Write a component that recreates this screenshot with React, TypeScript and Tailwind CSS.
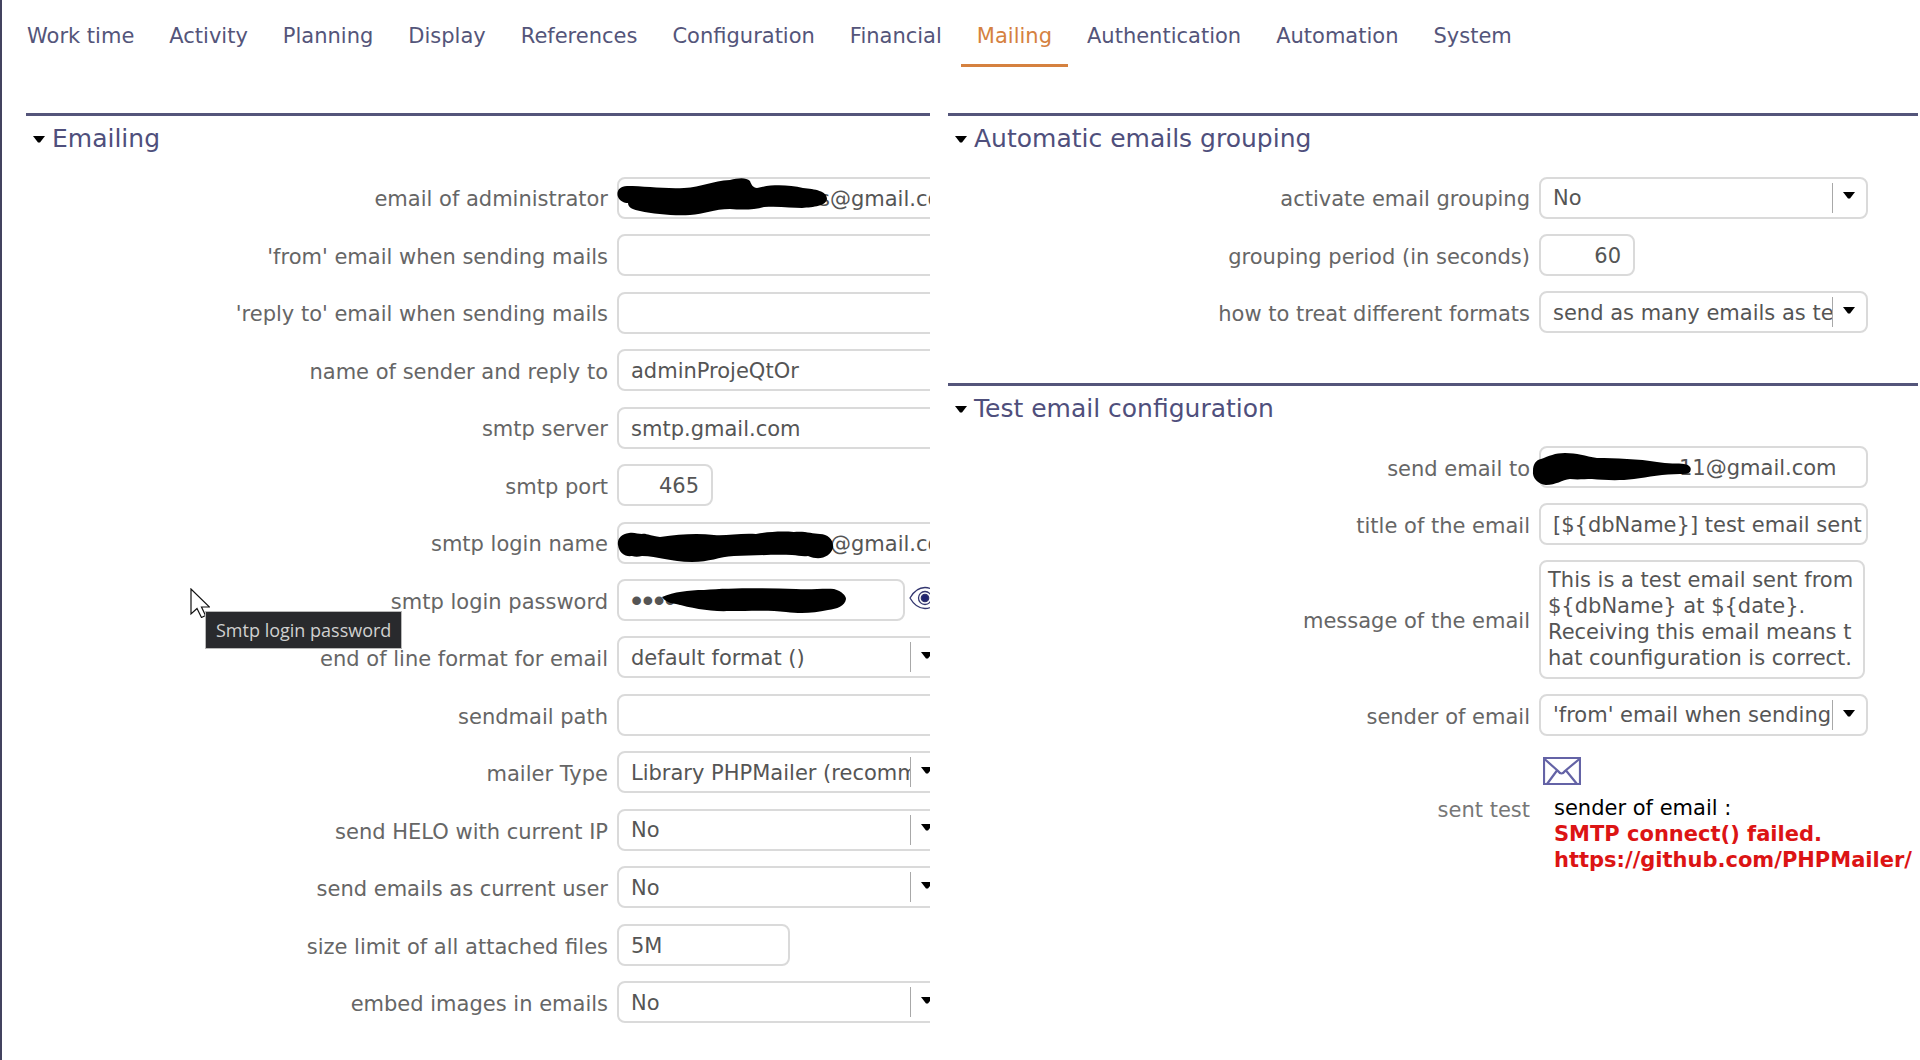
import { useState } from 'react';
import type { ReactNode } from 'react';

const tabs = [
  'Work time',
  'Activity',
  'Planning',
  'Display',
  'References',
  'Configuration',
  'Financial',
  'Mailing',
  'Authentication',
  'Automation',
  'System',
];

const testMessage = [
  'This is a test email sent from',
  '${dbName} at ${date}.',
  'Receiving this email means t',
  'hat counfiguration is correct.',
].join('\n');

const fieldBox = 'h-[42px] rounded-lg border-2 border-[#dadada] bg-white text-[#555555] outline-none';

function Caret() {
  return (
    <svg viewBox="0 0 12 7" className="h-[7px] w-3 shrink-0" aria-hidden="true">
      <path d="M0 0h12L7 6.500H5z" fill="#000" />
    </svg>
  );
}

function Section({ title, children }: { title: string; children: ReactNode }) {
  const [open, setOpen] = useState(true);
  return (
    <section className="overflow-hidden border-t-[3px] border-[#54557a]">
      <h2 className="text-[25px] leading-[30px] text-[#4f4f7c]">
        <button type="button" onClick={() => setOpen(!open)} className="flex items-center gap-[7px] px-[7px] py-2">
          <Caret />
          {title}
        </button>
      </h2>
      {open && children}
    </section>
  );
}

function Row({ label, id, children, extra }: { label: string; id: string; children: ReactNode; extra?: ReactNode }) {
  return (
    <div className="relative grid grid-cols-[582px_auto] items-center gap-[9px]">
      <label htmlFor={id} className="pt-[5px] text-right text-[#666666]">{label}</label>
      <div className="relative flex items-center gap-1">{children}</div>
      {extra}
    </div>
  );
}

function TextField({ id, value, className = 'w-[329px] px-3' }: { id: string; value: string; className?: string }) {
  return <input id={id} type="text" defaultValue={value} className={`${fieldBox} shrink-0 pt-[2px] ${className}`} />;
}

function SelectField({ id, value }: { id: string; value: string }) {
  return (
    <div className={`${fieldBox} flex w-[329px] shrink-0 items-center`}>
      <select id={id} defaultValue={value} className="h-full min-w-0 flex-1 appearance-none bg-transparent pt-[2px] pl-3 outline-none">
        <option>{value}</option>
      </select>
      <span className="h-[30px] w-px bg-[#a8a8a8]" />
      <span className="pointer-events-none mr-[11px] ml-[10px] pb-1">
        <Caret />
      </span>
    </div>
  );
}

function Scribble({ d }: { d: string }) {
  return (
    <svg className="pointer-events-none absolute top-0 left-0" viewBox="0 0 250 42" width="250" height="42" overflow="visible" aria-hidden="true">
      <path d={d} fill="#000" />
    </svg>
  );
}

function EyeIcon() {
  return (
    <svg viewBox="0 0 32 24" className="h-6 w-8" fill="none" stroke="#33366f" strokeWidth="1.3">
      <path d="M1 12C5 5 10 1.5 16 1.5S27 5 31 12C27 19 22 22.500 16 22.500S5 19 1 12z" />
      <circle cx="16" cy="12" r="6.500" />
      <circle cx="16" cy="12" r="3.700" fill="#1f2370" />
    </svg>
  );
}

function EnvelopeIcon() {
  return (
    <svg viewBox="0 0 38 28" className="h-7 w-[38px]" fill="none" stroke="#6463a6" strokeWidth="2.200">
      <path d="M1 1h36v26H1z" />
      <path d="M1 1.500l14 12.500q3.500 5 7 0L37 1.500M14 13.500L4 27M23 13.500L34 27" />
    </svg>
  );
}

function PointerTooltip() {
  return (
    <div className="pointer-events-none absolute top-[17px] left-[164px]">
      <svg viewBox="0 0 20 30" className="h-[30px] w-5" aria-hidden="true">
        <path d="M1 1v25l6-5.500 4.500 9 4-2-4-8.500h8z" fill="#fff" stroke="#111" strokeWidth="1.200" />
      </svg>
      <div
        role="tooltip"
        className="absolute top-[23px] left-[15px] h-[38px] border border-[#b8b8b8] bg-[#292a2d] px-[10px] font-['Open_Sans',sans-serif] text-lg leading-9 whitespace-nowrap text-[#d0d0d0]"
      >
        Smtp login password
      </div>
    </div>
  );
}

export default function App() {
  const [activeTab, setActiveTab] = useState('Mailing');

  return (
    <div className="min-h-screen overflow-hidden border-l-2 border-[#43435f] bg-white font-[Verdana,'DejaVu_Sans',sans-serif] text-[21px]">
      <nav className="flex gap-[3px] pt-[5px] pl-[9px]">
        {tabs.map((tab) => (
          <button
            key={tab}
            type="button"
            onClick={() => setActiveTab(tab)}
            className={`border-b-[3px] px-4 pt-[17px] pb-[14px] leading-7 whitespace-nowrap ${
              tab === activeTab ? 'border-[#d5813f] text-[#d5813f]' : 'border-transparent text-[#54557a]'
            }`}
          >
            {tab}
          </button>
        ))}
      </nav>

      <main className="grid grid-cols-[904fr_970fr] items-start gap-[18px] pt-[46px] pr-[2px] pl-6">
        <Section title="Emailing">
          <div className="mt-[7px] grid min-h-[862px] auto-rows-fr">
            <Row label="email of administrator" id="admin-email">
              <TextField id="admin-email" value="s@gmail.com" className="w-[329px] pl-[200px]" />
              <Scribble d="M10 9C2 9-1 15 1 20c2 4 6 6 10 6 0 5 6 7 12 8 14 3 34 5 50 4 14-1 24-6 40-6 12 1 24 1 34-2 16-1 28 1 38 1 12-1 24-2 25-9 0-8-12-10-24-11-14-3-30-4-46 0-4 0-6-4-7-7-4-4-12-3-20-1-18 1-28 7-46 8-20 1-40-2-57-2z" />
            </Row>
            <Row label="'from' email when sending mails" id="from-email">
              <TextField id="from-email" value="" />
            </Row>
            <Row label="'reply to' email when sending mails" id="reply-email">
              <TextField id="reply-email" value="" />
            </Row>
            <Row label="name of sender and reply to" id="sender-name">
              <TextField id="sender-name" value="adminProjeQtOr" />
            </Row>
            <Row label="smtp server" id="smtp-server">
              <TextField id="smtp-server" value="smtp.gmail.com" />
            </Row>
            <Row label="smtp port" id="smtp-port">
              <TextField id="smtp-port" value="465" className="w-24 px-3 text-right" />
            </Row>
            <Row label="smtp login name" id="smtp-login">
              <TextField id="smtp-login" value="@gmail.com" className="w-[329px] pl-[211px]" />
              <Scribble d="M12 11C4 12 0 17 1 23c1 8 7 12 14 11 3 1 6 1 10 0 16 0 28 6 50 6 18 0 26-5 42-6 18 0 38-2 58-1 6 0 10 2 16 1 12 5 22 1 25-8 1-8-5-14-13-14-8 0-14-3-26-2-14-1-26 0-38 2-16-1-30 2-42 1-16-2-34-1-54 2-10-1-14-4-18-3-4 0-8-2-13-1z" />
            </Row>
            <Row label="smtp login password" id="smtp-password" extra={<PointerTooltip />}>
              <input
                id="smtp-password"
                type="password"
                defaultValue="secret"
                className={`${fieldBox} w-72 shrink-0 px-3 font-['Liberation_Sans',sans-serif] text-[32px]`}
              />
              <Scribble d="M45 18c12-5 26-7 42-7 26-2 60-2 92-1 16 1 28-1 38 0 8 2 12 7 12 10-1 7-9 10-18 11-14 3-26 4-42 2-18-2-36-1-56-1-20 1-38-3-54-7-8-1-12-4-14-7z" />
              <button type="button" aria-label="Show password" className="shrink-0 pb-1">
                <EyeIcon />
              </button>
            </Row>
            <Row label="end of line format for email" id="eol-format">
              <SelectField id="eol-format" value="default format ()" />
            </Row>
            <Row label="sendmail path" id="sendmail-path">
              <TextField id="sendmail-path" value="" />
            </Row>
            <Row label="mailer Type" id="mailer-type">
              <SelectField id="mailer-type" value="Library PHPMailer (recommended)" />
            </Row>
            <Row label="send HELO with current IP" id="helo-ip">
              <SelectField id="helo-ip" value="No" />
            </Row>
            <Row label="send emails as current user" id="send-as-user">
              <SelectField id="send-as-user" value="No" />
            </Row>
            <Row label="size limit of all attached files" id="size-limit">
              <TextField id="size-limit" value="5M" className="w-[173px] px-3" />
            </Row>
            <Row label="embed images in emails" id="embed-images">
              <SelectField id="embed-images" value="No" />
            </Row>
          </div>
        </Section>

        <div className="flex min-w-0 flex-col gap-[42px]">
          <Section title="Automatic emails grouping">
            <div className="mt-[7px] grid min-h-[172px] auto-rows-fr">
              <Row label="activate email grouping" id="activate-grouping">
                <SelectField id="activate-grouping" value="No" />
              </Row>
              <Row label="grouping period (in seconds)" id="grouping-period">
                <TextField id="grouping-period" value="60" className="w-24 px-3 text-right" />
              </Row>
              <Row label="how to treat different formats" id="format-mode">
                <SelectField id="format-mode" value="send as many emails as templates" />
              </Row>
            </div>
          </Section>

          <Section title="Test email configuration">
            <div className="mt-[14px] flex flex-col gap-[15px]">
              <Row label="send email to" id="test-to">
                <TextField id="test-to" value="11@gmail.com" className="w-[329px] pl-[138px]" />
                <Scribble d="M2 13c8-3 14-6 24-6 12 0 20 3 32 5 18 0 42 1 60 4 10 2 22 1 27 2 6 1 8 4 6 8-2 2-6 2-10 2-16 0-32 3-46 5-16 2-30 1-42 0-8 0-14 1-22 0-8 1-14 6-24 6C-1 38-7 32-6 25c0-7 3-11 8-12z" />
              </Row>
              <Row label="title of the email" id="test-title">
                <TextField id="test-title" value="[${dbName}] test email sent" className="w-[329px] pl-3" />
              </Row>
              <Row label="message of the email" id="test-message">
                <textarea
                  id="test-message"
                  defaultValue={testMessage}
                  className="h-[119px] w-[326px] shrink-0 resize-none overflow-hidden rounded-lg border-2 border-[#dadada] pt-[5px] pl-[7px] leading-[26px] whitespace-pre text-[#555555] outline-none"
                />
              </Row>
              <Row label="sender of email" id="test-sender">
                <SelectField id="test-sender" value="'from' email when sending mails" />
              </Row>
              <div className="grid grid-cols-[582px_auto] items-start gap-x-[9px] gap-y-[10px] pt-[6px]">
                <button type="button" aria-label="Send test email" className="col-start-2 w-fit pl-1">
                  <EnvelopeIcon />
                </button>
                <span className="text-right text-[#777777]">sent test</span>
                <output className="block overflow-hidden pl-[15px] leading-[26px] whitespace-nowrap text-black">
                  sender of email :
                  <strong className="block text-[#dc1414]">SMTP connect() failed.</strong>
                  <strong className="block text-[#dc1414]">https://github.com/PHPMailer/</strong>
                </output>
              </div>
            </div>
          </Section>
        </div>
      </main>
    </div>
  );
}
